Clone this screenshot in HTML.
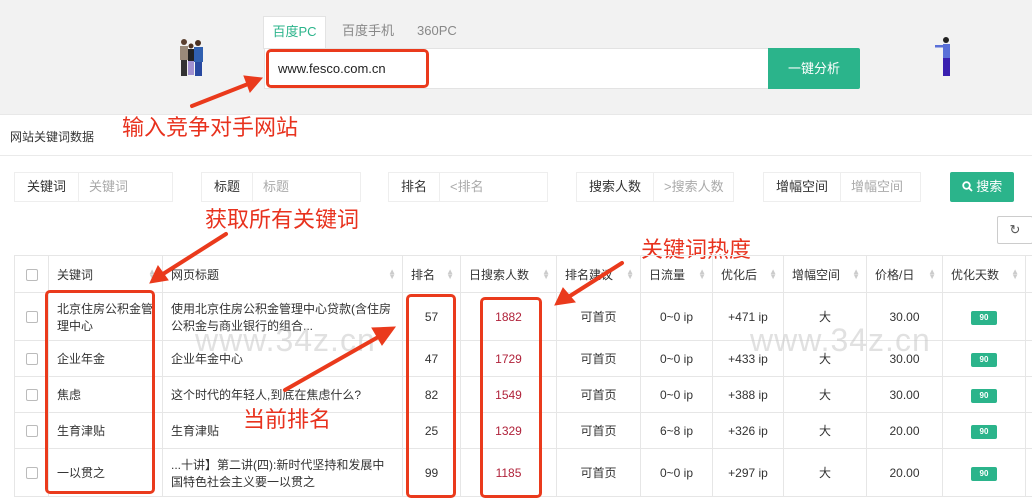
<!DOCTYPE html>
<html><head><meta charset="utf-8"><style>
*{margin:0;padding:0;box-sizing:border-box}
body{width:1032px;height:500px;overflow:hidden;background:#fff;font-family:"Liberation Sans","Noto Sans CJK SC",sans-serif;font-size:12px;color:#333;position:relative}
.a{position:absolute}
.top{left:0;top:0;width:1032px;height:115px;background:#f2f2f2;border-bottom:1px solid #e8e8e8}
.tab{top:16px;height:33px;line-height:30px;font-size:13px;color:#888}
.f{top:172px;height:30px;border:1px solid #eee;display:flex;font-size:13px}
.f span{display:block;padding:0 12px;line-height:28px;border-right:1px solid #eee;color:#333}
.f i{font-style:normal;padding-left:10px;line-height:28px;color:#aaa}
table{position:absolute;left:14px;top:255px;border-collapse:collapse;table-layout:fixed;width:1030px}
td,th{border:1px solid #e6e6e6;font-weight:normal;font-size:12px;padding:0 8px;vertical-align:middle}
th{text-align:left;height:37px;position:relative}
th .s{position:absolute;right:6px;top:13px;color:#ccc;font-size:8px;line-height:5px}
td.c{text-align:center}
.cb{display:inline-block;width:12px;height:12px;border:1px solid #bbb;border-radius:2px;vertical-align:middle}
.red{color:#b0223a}
.b90{display:inline-block;background:#2bb48b;color:#fff;font-size:8px;font-weight:bold;width:26px;height:14px;line-height:14px;text-align:center;border-radius:2px}
.ann{color:#e8321e;font-size:22px}
.box{border:3px solid #ea3a1c;border-radius:5px}
.wm{color:rgba(200,200,200,0.55);font-size:32px;letter-spacing:1px}
</style></head><body>
<div class="a top"></div>
<div class="a tab" style="left:263px;width:63px;background:#fff;border:1px solid #e3e3e3;border-bottom:none;text-align:center;color:#2bb48b">百度PC</div>
<div class="a tab" style="left:342px">百度手机</div>
<div class="a tab" style="left:417px">360PC</div>
<div class="a" style="left:264px;top:48px;width:505px;height:41px;background:#fff;border:1px solid #e3e3e3"></div>
<div class="a" style="left:278px;top:61px;font-size:13px;color:#222">www.fesco.com.cn</div>
<div class="a" style="left:768px;top:48px;width:92px;height:41px;background:#2bb48b;color:#fff;font-size:13px;text-align:center;line-height:41px;border-radius:0 2px 2px 0">一键分析</div>
<div class="a box" style="left:266px;top:49px;width:163px;height:39px"></div>
<svg class="a" style="left:175px;top:38px" width="32" height="40"><circle cx="9" cy="4" r="3" fill="#5a4030"/><rect x="5" y="8" width="8" height="14" fill="#9a8a7a"/><rect x="6" y="22" width="6" height="16" fill="#333"/><circle cx="16" cy="8" r="2.5" fill="#4a3020"/><rect x="13" y="11" width="6" height="12" fill="#222"/><rect x="13" y="23" width="6" height="14" fill="#a090d0"/><circle cx="23" cy="5" r="3" fill="#4a3020"/><rect x="19" y="9" width="9" height="15" fill="#3060b0"/><rect x="20" y="24" width="7" height="14" fill="#2848a0"/></svg>
<svg class="a" style="left:934px;top:36px" width="20" height="42"><circle cx="12" cy="4" r="3" fill="#222"/><rect x="9" y="8" width="7" height="14" fill="#5a70d8"/><rect x="1" y="9" width="9" height="2.5" fill="#5a70d8"/><rect x="9" y="22" width="7" height="18" fill="#3a20b0"/></svg>
<div class="a ann" style="left:122px;top:110px">输入竞争对手网站</div>
<div class="a" style="left:10px;top:128px;font-size:12px">网站关键词数据</div>
<div class="a" style="left:0;top:155px;width:1032px;height:1px;background:#eaeaea"></div>
<div class="a f" style="left:14px;width:159px"><span>关键词</span><i>关键词</i></div>
<div class="a f" style="left:201px;width:160px"><span>标题</span><i>标题</i></div>
<div class="a f" style="left:388px;width:160px"><span>排名</span><i>&lt;排名</i></div>
<div class="a f" style="left:576px;width:158px"><span>搜索人数</span><i>&gt;搜索人数</i></div>
<div class="a f" style="left:763px;width:158px"><span>增幅空间</span><i>增幅空间</i></div>
<div class="a" style="left:950px;top:172px;width:64px;height:30px;background:#2bb48b;color:#fff;font-size:13px;line-height:30px;text-align:center;border-radius:2px"><svg width="11" height="11" style="vertical-align:-1px"><circle cx="4.5" cy="4.5" r="3.3" fill="none" stroke="#fff" stroke-width="1.8"/><line x1="7" y1="7" x2="10" y2="10" stroke="#fff" stroke-width="1.8"/></svg> 搜索</div>
<div class="a" style="left:997px;top:216px;width:36px;height:28px;border:1px solid #ccc;border-radius:2px;text-align:center;line-height:26px;font-size:13px;color:#555">↻</div>
<div class="a ann" style="left:205px;top:202px">获取所有关键词</div>
<div class="a ann" style="left:641px;top:232px">关键词热度</div>
<table>
<colgroup><col style="width:34px"><col style="width:114px"><col style="width:240px"><col style="width:58px"><col style="width:96px"><col style="width:84px"><col style="width:72px"><col style="width:71px"><col style="width:83px"><col style="width:76px"><col style="width:83px"><col style="width:19px"></colgroup>
<tr><th style="text-align:center"><span class="cb"></span></th><th>关键词<span class="s">▲<br>▼</span></th><th>网页标题<span class="s">▲<br>▼</span></th><th>排名<span class="s">▲<br>▼</span></th><th>日搜索人数<span class="s">▲<br>▼</span></th><th>排名建议<span class="s">▲<br>▼</span></th><th>日流量<span class="s">▲<br>▼</span></th><th>优化后<span class="s">▲<br>▼</span></th><th>增幅空间<span class="s">▲<br>▼</span></th><th>价格/日<span class="s">▲<br>▼</span></th><th>优化天数<span class="s">▲<br>▼</span></th><th></th></tr>
<tr style="height:48px"><td class="c"><span class="cb"></span></td><td>北京住房公积金管理中心</td><td>使用北京住房公积金管理中心贷款(含住房公积金与商业银行的组合...</td><td class="c">57</td><td class="c red">1882</td><td class="c">可首页</td><td class="c">0~0 ip</td><td class="c">+471 ip</td><td class="c">大</td><td class="c">30.00</td><td class="c"><span class="b90">90</span></td><td></td></tr>
<tr style="height:36px"><td class="c"><span class="cb"></span></td><td>企业年金</td><td>企业年金中心</td><td class="c">47</td><td class="c red">1729</td><td class="c">可首页</td><td class="c">0~0 ip</td><td class="c">+433 ip</td><td class="c">大</td><td class="c">30.00</td><td class="c"><span class="b90">90</span></td><td></td></tr>
<tr style="height:36px"><td class="c"><span class="cb"></span></td><td>焦虑</td><td>这个时代的年轻人,到底在焦虑什么?</td><td class="c">82</td><td class="c red">1549</td><td class="c">可首页</td><td class="c">0~0 ip</td><td class="c">+388 ip</td><td class="c">大</td><td class="c">30.00</td><td class="c"><span class="b90">90</span></td><td></td></tr>
<tr style="height:36px"><td class="c"><span class="cb"></span></td><td>生育津贴</td><td>生育津贴</td><td class="c">25</td><td class="c red">1329</td><td class="c">可首页</td><td class="c">6~8 ip</td><td class="c">+326 ip</td><td class="c">大</td><td class="c">20.00</td><td class="c"><span class="b90">90</span></td><td></td></tr>
<tr style="height:48px"><td class="c"><span class="cb"></span></td><td>一以贯之</td><td>...十讲】第二讲(四):新时代坚持和发展中国特色社会主义要一以贯之</td><td class="c">99</td><td class="c red">1185</td><td class="c">可首页</td><td class="c">0~0 ip</td><td class="c">+297 ip</td><td class="c">大</td><td class="c">20.00</td><td class="c"><span class="b90">90</span></td><td></td></tr>
</table>
<div class="a wm" style="left:195px;top:322px">www.34z.cn</div>
<div class="a wm" style="left:750px;top:322px">www.34z.cn</div>
<div class="a box" style="left:45px;top:290px;width:110px;height:204px"></div>
<div class="a box" style="left:406px;top:294px;width:50px;height:204px"></div>
<div class="a box" style="left:480px;top:297px;width:62px;height:201px"></div>
<div class="a ann" style="left:243px;top:402px">当前排名</div>
<svg class="a" style="left:0;top:0" width="1032" height="500">
<g fill="#ea3a1c" stroke="#ea3a1c" stroke-width="4" stroke-linecap="round">
<line x1="192" y1="106" x2="248" y2="84"/><polygon points="262,78 244,76 250,92" stroke-width="1"/>
<line x1="226" y1="234" x2="163" y2="274"/><polygon points="150,283 158,266 168,280" stroke-width="1"/>
<line x1="285" y1="390" x2="380" y2="336"/><polygon points="395,327 372,328 382,345" stroke-width="1"/>
<line x1="622" y1="263" x2="570" y2="296"/><polygon points="555,305 563,288 575,302" stroke-width="1"/>
</g></svg>
</body></html>
